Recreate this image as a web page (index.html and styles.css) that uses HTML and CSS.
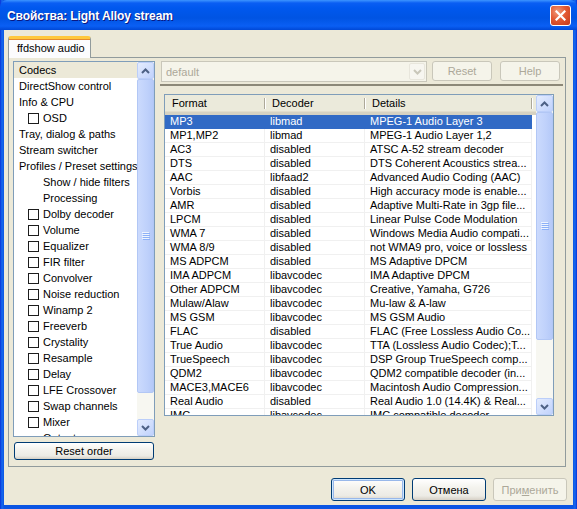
FILE: index.html
```html
<!DOCTYPE html>
<html lang="ru">

<head>
  <meta charset="UTF-8">
  <title>Свойства: Light Alloy stream</title>
  <link rel="stylesheet" href="styles.css">
</head>

<body>
  <div class="window">
    <div class="titlebar">
      <span class="title">Свойства: Light Alloy stream</span>
      <span class="close">
        <svg width="11" height="11" viewBox="0 0 11 11"><path d="M1.5 1.5 L9.5 9.5 M9.5 1.5 L1.5 9.5" stroke="#fff" stroke-width="2.2" stroke-linecap="square"/></svg>
      </span>
    </div>

    <div class="client">
      <div class="tabs">
        <div class="tab">ffdshow audio</div>
      </div>

      <div class="pane">
        <div class="left">
          <div class="tree">
            <div class="tree-items">
              <div class="item sel">Codecs</div>
              <div class="item">DirectShow control</div>
              <div class="item">Info &amp; CPU</div>
              <div class="item chk"><span class="box"></span>OSD</div>
              <div class="item">Tray, dialog &amp; paths</div>
              <div class="item">Stream switcher</div>
              <div class="item">Profiles / Preset settings</div>
              <div class="item sub">Show / hide filters</div>
              <div class="item sub">Processing</div>
              <div class="item chk"><span class="box"></span>Dolby decoder</div>
              <div class="item chk"><span class="box"></span>Volume</div>
              <div class="item chk"><span class="box"></span>Equalizer</div>
              <div class="item chk"><span class="box"></span>FIR filter</div>
              <div class="item chk"><span class="box"></span>Convolver</div>
              <div class="item chk"><span class="box"></span>Noise reduction</div>
              <div class="item chk"><span class="box"></span>Winamp 2</div>
              <div class="item chk"><span class="box"></span>Freeverb</div>
              <div class="item chk"><span class="box"></span>Crystality</div>
              <div class="item chk"><span class="box"></span>Resample</div>
              <div class="item chk"><span class="box"></span>Delay</div>
              <div class="item chk"><span class="box"></span>LFE Crossover</div>
              <div class="item chk"><span class="box"></span>Swap channels</div>
              <div class="item chk"><span class="box"></span>Mixer</div>
              <div class="item sub">Output</div>
            </div>
            <div class="vscroll">
              <div class="sb-btn"><svg width="9" height="6" viewBox="0 0 9 6"><path d="M1 5 L4.5 1.5 L8 5" stroke="#4d6185" stroke-width="2" fill="none"/></svg></div>
              <div class="sb-thumb tree-thumb">
                <svg width="8" height="8" viewBox="0 0 8 8"><path d="M0 0.5H7M0 2.5H7M0 4.5H7M0 6.5H7" stroke="#eef4fe"/><path d="M1 1.5H8M1 3.5H8M1 5.5H8M1 7.5H8" stroke="#8cb0f8"/></svg>
              </div>
              <div class="sb-track"></div>
              <div class="sb-btn"><svg width="9" height="6" viewBox="0 0 9 6"><path d="M1 1 L4.5 4.5 L8 1" stroke="#4d6185" stroke-width="2" fill="none"/></svg></div>
            </div>
          </div>
          <button class="btn reset-order">Reset order</button>
        </div>

        <div class="right">
          <div class="toolbar">
            <div class="combo">
              <span class="combo-text">default</span>
              <span class="combo-btn"><svg width="9" height="6" viewBox="0 0 9 6"><path d="M1 1 L4.5 4.5 L8 1" stroke="#c9c7ba" stroke-width="2" fill="none"/></svg></span>
            </div>
            <button class="btn small" disabled>Reset</button>
            <button class="btn small help" disabled>Help</button>
          </div>
          <div class="sep"></div>

          <div class="listview">
            <div class="lv-body">
              <div class="lv-header">
                <div class="hcol">Format</div>
                <div class="hcol">Decoder</div>
                <div class="hcol">Details</div>
                <div class="hfill"></div>
              </div>
              <div class="lv-rows">
                <div class="row sel"><span>MP3</span><span>libmad</span><span>MPEG-1 Audio Layer 3</span></div>
                <div class="row"><span>MP1,MP2</span><span>libmad</span><span>MPEG-1 Audio Layer 1,2</span></div>
                <div class="row"><span>AC3</span><span>disabled</span><span>ATSC A-52 stream decoder</span></div>
                <div class="row"><span>DTS</span><span>disabled</span><span>DTS Coherent Acoustics strea...</span></div>
                <div class="row"><span>AAC</span><span>libfaad2</span><span>Advanced Audio Coding (AAC)</span></div>
                <div class="row"><span>Vorbis</span><span>disabled</span><span>High accuracy mode is enable...</span></div>
                <div class="row"><span>AMR</span><span>disabled</span><span>Adaptive Multi-Rate in 3gp file...</span></div>
                <div class="row"><span>LPCM</span><span>disabled</span><span>Linear Pulse Code Modulation</span></div>
                <div class="row"><span>WMA 7</span><span>disabled</span><span>Windows Media Audio compati...</span></div>
                <div class="row"><span>WMA 8/9</span><span>disabled</span><span>not WMA9 pro, voice or lossless</span></div>
                <div class="row"><span>MS ADPCM</span><span>disabled</span><span>MS Adaptive DPCM</span></div>
                <div class="row"><span>IMA ADPCM</span><span>libavcodec</span><span>IMA Adaptive DPCM</span></div>
                <div class="row"><span>Other ADPCM</span><span>libavcodec</span><span>Creative, Yamaha, G726</span></div>
                <div class="row"><span>Mulaw/Alaw</span><span>libavcodec</span><span>Mu-law &amp; A-law</span></div>
                <div class="row"><span>MS GSM</span><span>libavcodec</span><span>MS GSM Audio</span></div>
                <div class="row"><span>FLAC</span><span>disabled</span><span>FLAC (Free Lossless Audio Co...</span></div>
                <div class="row"><span>True Audio</span><span>libavcodec</span><span>TTA (Lossless Audio Codec);T...</span></div>
                <div class="row"><span>TrueSpeech</span><span>libavcodec</span><span>DSP Group TrueSpeech comp...</span></div>
                <div class="row"><span>QDM2</span><span>libavcodec</span><span>QDM2 compatible decoder (in...</span></div>
                <div class="row"><span>MACE3,MACE6</span><span>libavcodec</span><span>Macintosh Audio Compression...</span></div>
                <div class="row"><span>Real Audio</span><span>disabled</span><span>Real Audio 1.0 (14.4K) &amp; Real...</span></div>
                <div class="row"><span>IMC</span><span>libavcodec</span><span>IMC compatible decoder</span></div>
              </div>
            </div>
            <div class="vscroll">
              <div class="sb-btn"><svg width="9" height="6" viewBox="0 0 9 6"><path d="M1 5 L4.5 1.5 L8 5" stroke="#4d6185" stroke-width="2" fill="none"/></svg></div>
              <div class="sb-thumb lv-thumb">
                <svg width="8" height="8" viewBox="0 0 8 8"><path d="M0 0.5H7M0 2.5H7M0 4.5H7M0 6.5H7" stroke="#eef4fe"/><path d="M1 1.5H8M1 3.5H8M1 5.5H8M1 7.5H8" stroke="#8cb0f8"/></svg>
              </div>
              <div class="sb-track"></div>
              <div class="sb-btn"><svg width="9" height="6" viewBox="0 0 9 6"><path d="M1 1 L4.5 4.5 L8 1" stroke="#4d6185" stroke-width="2" fill="none"/></svg></div>
            </div>
          </div>
        </div>
      </div>

      <div class="buttons">
        <button class="btn dlg default">OK</button>
        <button class="btn dlg">Отмена</button>
        <button class="btn dlg" disabled>При<u>м</u>енить</button>
      </div>
    </div>
  </div>
</body>

</html>
```

FILE: styles.css
```css
* {
  box-sizing: border-box;
}

body {
  margin: 0;
  background: #0b4fdc;
  font-family: "Liberation Sans", Arial, sans-serif;
  font-size: 11px;
  color: #000;
}

.window {
  width: 577px;
  height: 509px;
  display: flex;
  flex-direction: column;
  background: linear-gradient(to right, #0831d9 0, #166aee 2px, #0b55e3 4px, #0b55e3 573px, #166aee 575px, #0831d9 577px);
}

/* title bar */
.titlebar {
  height: 30px;
  display: flex;
  align-items: center;
  padding: 0 6px 0 7px;
  background: linear-gradient(to bottom, #3d95ff 0, #0a5ef3 3px, #0058ee 8px, #0054e3 18px, #0a5ff4 26px, #0048d6 30px);
  border-radius: 7px 7px 0 0;
}

.title {
  flex: 1;
  color: #fff;
  font-weight: bold;
  font-size: 12px;
  letter-spacing: -0.1px;
  text-shadow: 1px 1px 0 #0a1883;
  padding-top: 1px;
}

.close {
  width: 21px;
  height: 21px;
  border: 1px solid #fff;
  border-radius: 3px;
  background: radial-gradient(circle at 35% 30%, #f09a7a 0, #e35a33 45%, #c4381a 100%);
  display: flex;
  align-items: center;
  justify-content: center;
}

/* dialog body */
.client {
  flex: 1;
  margin: 0 4px 4px 4px;
  background: #ece9d8;
  padding: 6px 6px 0 4px;
  display: flex;
  flex-direction: column;
}

.tabs {
  height: 21px;
  display: flex;
  position: relative;
  z-index: 1;
}

.tab {
  width: 83px;
  height: 22px;
  padding: 3px 0 0 8px;
  background: #fcfcfe;
  border: 1px solid #919b9c;
  border-bottom: none;
  border-top: 3px solid #ffc83c;
  border-radius: 3px 3px 0 0;
  box-shadow: inset 0 1px 0 #e68b2c;
}

.pane {
  width: 558px;
  height: 410px;
  border: 1px solid #919b9c;
  padding: 3px 3px 0 4px;
  display: flex;
  gap: 6px;
}

/* left tree list */
.left {
  width: 142px;
  display: flex;
  flex-direction: column;
}

.tree {
  height: 376px;
  border: 1px solid #7f9db9;
  background: #fff;
  display: flex;
}

.tree-items {
  flex: 1;
  overflow: hidden;
}

.item {
  height: 16px;
  line-height: 16px;
  padding-left: 5px;
  white-space: nowrap;
  display: flex;
  align-items: center;
}

.item.sel {
  background: #ece9d8;
}

.item.sub {
  padding-left: 29px;
}

.item.chk {
  padding-left: 14px;
}

.box {
  width: 11px;
  height: 11px;
  border: 1px solid #1c1c1c;
  background: #fff;
  margin-right: 4px;
  flex: none;
}

/* scrollbars */
.vscroll {
  width: 17px;
  flex: none;
  display: flex;
  flex-direction: column;
  background: #f7f7f1;
}

.sb-btn {
  height: 17px;
  flex: none;
  border: 1px solid #bbcef9;
  border-radius: 2px;
  background: linear-gradient(135deg, #e4ecfe, #c0d2fc);
  display: flex;
  align-items: center;
  justify-content: center;
}

.sb-thumb {
  flex: none;
  border: 1px solid #b2c7f5;
  border-radius: 2px;
  background: linear-gradient(to right, #cbdafd, #bfd1fb 60%, #b5c9f8);
  display: flex;
  align-items: center;
  justify-content: center;
}

.tree-thumb {
  height: 314px;
}

.lv-thumb {
  height: 228px;
}

.sb-track {
  flex: 1;
}

/* buttons */
.btn {
  font-family: inherit;
  font-size: 11px;
  color: #000;
  border: 1px solid #003c74;
  border-radius: 3px;
  background: linear-gradient(to bottom, #ffffff 0, #f4f3ee 40%, #ecebe5 80%, #d6d0c5 100%);
  padding: 0;
}

.btn:disabled {
  color: #aca899;
  border-color: #c9c7ba;
  background: #f5f4ea;
}

.reset-order {
  height: 18px;
  margin: 5px 1px 0 1px;
}

/* right side */
.right {
  width: 401px;
  display: flex;
  flex-direction: column;
}

.toolbar {
  height: 21px;
  display: flex;
}

.combo {
  width: 266px;
  height: 21px;
  border: 1px solid #c9c7ba;
  background: #f5f4ea;
  display: flex;
  align-items: center;
  padding: 1px;
}

.combo-text {
  flex: 1;
  color: #aca899;
  padding-left: 3px;
}

.combo-btn {
  width: 16px;
  height: 17px;
  border: 1px solid #e8e6dc;
  border-radius: 2px;
  background: #f7f6f0;
  display: flex;
  align-items: center;
  justify-content: center;
}

.btn.small {
  width: 60px;
  height: 20px;
  margin-left: 5px;
}

.btn.small.help {
  margin-left: 8px;
}

.sep {
  height: 2px;
  margin: 2px -1px 0 -1px;
  background: #8c8878;
}

/* list view */
.listview {
  height: 322px;
  margin: 8px 8px 0 3px;
  border: 1px solid #7f9db9;
  background: #fff;
  display: flex;
}

.lv-body {
  flex: 1;
  overflow: hidden;
}

.lv-header {
  height: 20px;
  display: flex;
  background: #ebeadb;
  border-bottom: 3px solid #d6d2c2;
  box-shadow: inset 0 -1px 0 #e2decd;
}

.hcol {
  flex: none;
  line-height: 17px;
  padding-left: 7px;
  position: relative;
}

.hcol:nth-child(1),
.row span:nth-child(1) {
  width: 100px;
}

.hcol:nth-child(2),
.row span:nth-child(2) {
  width: 100px;
}

.hcol:nth-child(3),
.row span:nth-child(3) {
  width: 167px;
}

.hcol::after {
  content: "";
  position: absolute;
  right: 0;
  top: 3px;
  bottom: 3px;
  width: 1px;
  background: #aca899;
  box-shadow: 1px 0 0 #fff;
}

.hfill {
  flex: 1;
}

.row {
  height: 14px;
  display: flex;
  white-space: nowrap;
}

.row span {
  flex: none;
  line-height: 13px;
  padding-left: 5px;
  border-right: 1px solid #f0f0f0;
  border-bottom: 1px solid #f0f0f0;
  overflow: hidden;
}

.row.sel span {
  background: #316ac5;
  color: #fff;
  border-color: #316ac5;
}

/* bottom buttons */
.buttons {
  margin-top: 11px;
  display: flex;
  justify-content: flex-end;
  gap: 7px;
}

.btn.dlg {
  width: 74px;
  height: 23px;
}

.btn.dlg u {
  text-decoration: underline;
}

.btn.default {
  box-shadow: inset 0 0 0 1px #cee7ff, inset 0 0 0 2px #98b8ea;
}
```
